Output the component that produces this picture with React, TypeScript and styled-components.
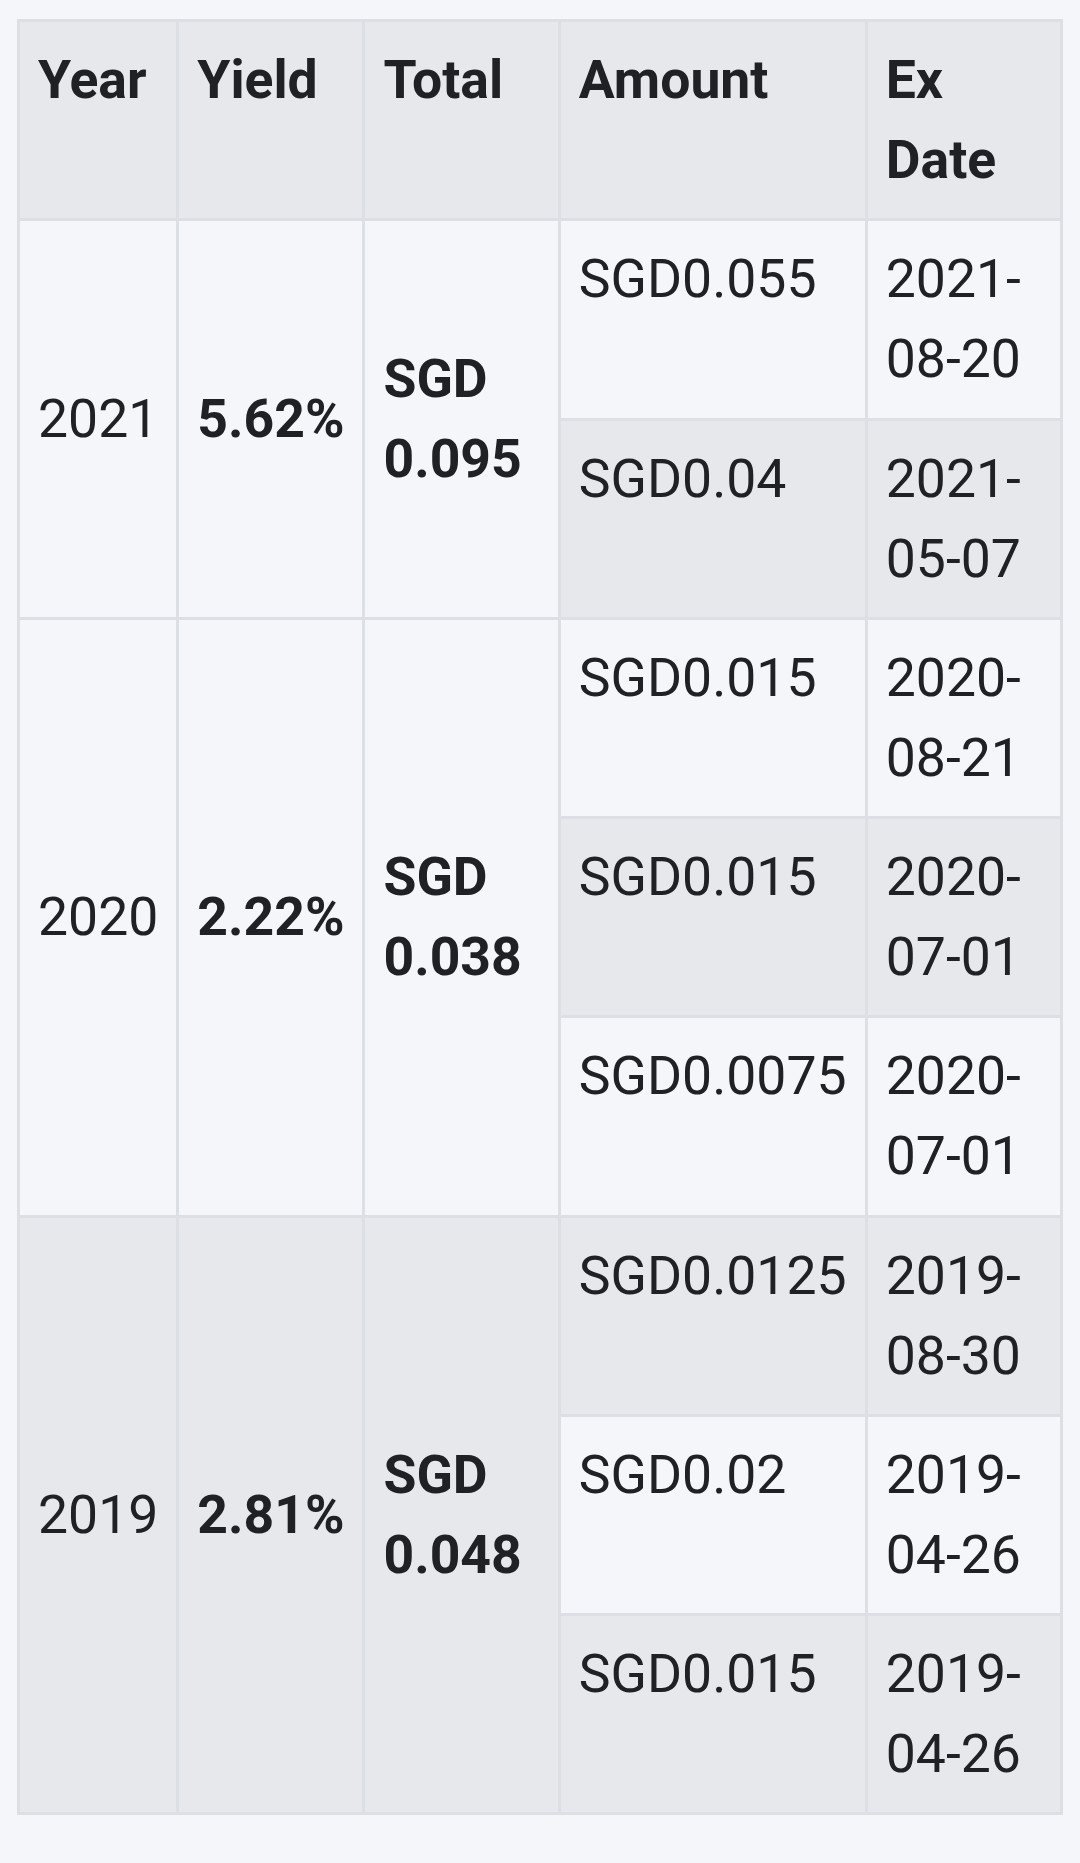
import React from "react";
import styled, { createGlobalStyle } from "styled-components";

const GlobalStyle = createGlobalStyle`
  html, body {
    margin: 0;
    padding: 0;
    background: #f4f6fa;
  }
  body {
    font-family: Roboto, "Noto Sans", "Liberation Sans", sans-serif;
    color: #202124;
  }
`;

const Page = styled.div`
  padding: 19px 17px 50px 17px;
  background: #f4f6fa;
  min-height: 1863px;
  box-sizing: border-box;
`;

const Table = styled.table`
  border-collapse: collapse;
  border: 3px solid #dcdfe3;
  font-size: 53.5px;
  line-height: 80px;
  color: #202124;
`;

const HeadCell = styled.th<{ $w: number }>`
  width: ${(p) => p.$w}px;
  background: #e7e8ec;
  border: 3px solid #dcdfe3;
  padding: 18px 18px 18.25px;
  text-align: left;
  vertical-align: top;
  font-weight: 700;
`;

const Row = styled.tr<{ $shade: boolean }>`
  background: ${(p) => (p.$shade ? "#e7e8ec" : "#f4f6fa")};
`;

const Cell = styled.td<{ $bold?: boolean; $middle?: boolean }>`
  border: 3px solid #dcdfe3;
  padding: 18px 18px 18.25px;
  text-align: left;
  vertical-align: ${(p) => (p.$middle ? "middle" : "top")};
  font-weight: ${(p) => (p.$bold ? 700 : 400)};
`;

type Payment = { amount: string; date: string };
type YearGroup = { year: string; yieldPct: string; total: string; payments: Payment[] };

const data: YearGroup[] = [
  {
    year: "2021",
    yieldPct: "5.62%",
    total: "SGD 0.095",
    payments: [
      { amount: "SGD0.055", date: "2021-08-20" },
      { amount: "SGD0.04", date: "2021-05-07" },
    ],
  },
  {
    year: "2020",
    yieldPct: "2.22%",
    total: "SGD 0.038",
    payments: [
      { amount: "SGD0.015", date: "2020-08-21" },
      { amount: "SGD0.015", date: "2020-07-01" },
      { amount: "SGD0.0075", date: "2020-07-01" },
    ],
  },
  {
    year: "2019",
    yieldPct: "2.81%",
    total: "SGD 0.048",
    payments: [
      { amount: "SGD0.0125", date: "2019-08-30" },
      { amount: "SGD0.02", date: "2019-04-26" },
      { amount: "SGD0.015", date: "2019-04-26" },
    ],
  },
];

export default function App() {
  let rowIndex = 0;
  const rows: React.ReactNode[] = [];
  data.forEach((g) => {
    g.payments.forEach((p, i) => {
      const shade = rowIndex % 2 === 1;
      rowIndex++;
      rows.push(
        <Row key={`${g.year}-${i}`} $shade={shade}>
          {i === 0 && (
            <>
              <Cell rowSpan={g.payments.length} $middle>
                {g.year}
              </Cell>
              <Cell rowSpan={g.payments.length} $middle $bold>
                {g.yieldPct}
              </Cell>
              <Cell rowSpan={g.payments.length} $middle $bold>
                {g.total}
              </Cell>
            </>
          )}
          <Cell>{p.amount}</Cell>
          <Cell>{p.date}</Cell>
        </Row>
      );
    });
  });

  return (
    <>
      <GlobalStyle />
      <Page>
        <Table>
          <thead>
            <tr>
              <HeadCell $w={120}>Year</HeadCell>
              <HeadCell $w={146}>Yield</HeadCell>
              <HeadCell $w={157}>Total</HeadCell>
              <HeadCell $w={268}>Amount</HeadCell>
              <HeadCell $w={157}>Ex Date</HeadCell>
            </tr>
          </thead>
          <tbody>{rows}</tbody>
        </Table>
      </Page>
    </>
  );
}
